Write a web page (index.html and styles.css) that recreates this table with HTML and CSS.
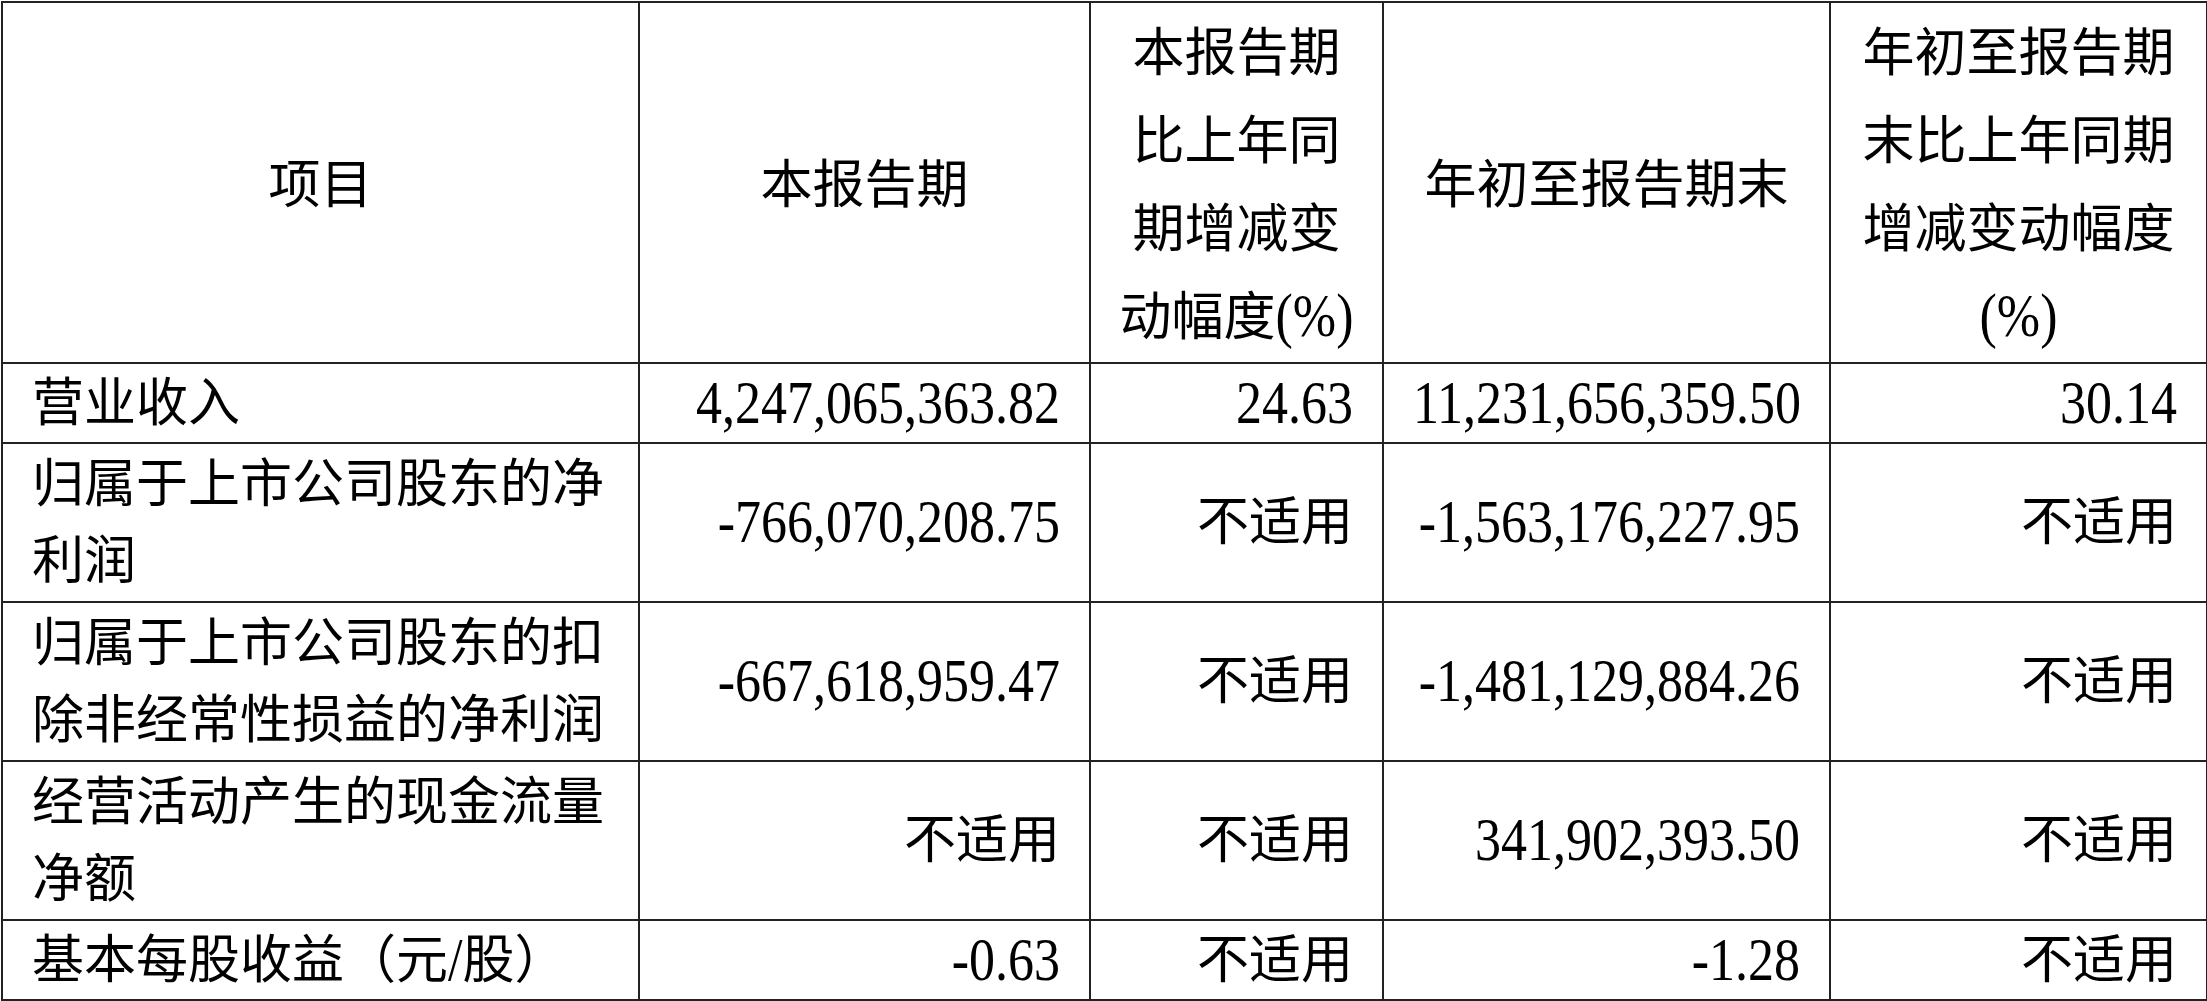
FILE: index.html
```html
<!DOCTYPE html>
<html lang="zh-CN">
<head>
<meta charset="utf-8">
<title>主要会计数据和财务指标</title>
<link rel="stylesheet" href="styles.css">
</head>
<body>
<div class="page">
<table class="report">
  <colgroup>
    <col class="c-item">
    <col class="c-cur">
    <col class="c-cur-pct">
    <col class="c-ytd">
    <col class="c-ytd-pct">
  </colgroup>
  <thead>
    <tr class="head">
      <th>项目</th>
      <th>本报告期</th>
      <th>本报告期<br>比上年同<br>期增减变<br>动幅度<span class="lat">(%)</span></th>
      <th>年初至报告期末</th>
      <th>年初至报告期<br>末比上年同期<br>增减变动幅度<br><span class="lat">(%)</span></th>
    </tr>
  </thead>
  <tbody>
    <tr class="row-single">
      <td class="item">营业收入</td>
      <td class="val"><span class="lat">4,247,065,363.82</span></td>
      <td class="val"><span class="lat">24.63</span></td>
      <td class="val"><span class="lat">11,231,656,359.50</span></td>
      <td class="val"><span class="lat">30.14</span></td>
    </tr>
    <tr class="row-double">
      <td class="item">归属于上市公司股东的净利润</td>
      <td class="val"><span class="lat">-766,070,208.75</span></td>
      <td class="val">不适用</td>
      <td class="val"><span class="lat">-1,563,176,227.95</span></td>
      <td class="val">不适用</td>
    </tr>
    <tr class="row-double">
      <td class="item">归属于上市公司股东的扣除非经常性损益的净利润</td>
      <td class="val"><span class="lat">-667,618,959.47</span></td>
      <td class="val">不适用</td>
      <td class="val"><span class="lat">-1,481,129,884.26</span></td>
      <td class="val">不适用</td>
    </tr>
    <tr class="row-double">
      <td class="item">经营活动产生的现金流量净额</td>
      <td class="val">不适用</td>
      <td class="val">不适用</td>
      <td class="val"><span class="lat">341,902,393.50</span></td>
      <td class="val">不适用</td>
    </tr>
    <tr class="row-single">
      <td class="item">基本每股收益（元<span class="lat">/</span>股）</td>
      <td class="val"><span class="lat">-0.63</span></td>
      <td class="val">不适用</td>
      <td class="val"><span class="lat">-1.28</span></td>
      <td class="val">不适用</td>
    </tr>
  </tbody>
</table>
</div>
</body>
</html>
```

FILE: styles.css
```css
html, body {
  margin: 0;
  padding: 0;
  background: #ffffff;
}

.page {
  padding: 1px 0 0 1px;
}

.report {
  border-collapse: collapse;
  table-layout: fixed;
  width: 2205px;
  font-family: "Liberation Serif", "Noto Sans CJK SC", serif;
  font-size: 52px;
  color: #000000;
}

.c-item { width: 637px; }
.c-cur { width: 451px; }
.c-cur-pct { width: 293px; }
.c-ytd { width: 447px; }
.c-ytd-pct { width: 377px; }

.report th,
.report td {
  border: 2px solid #222222;
  padding: 0 29px 0 29px;
  vertical-align: middle;
  overflow: hidden;
}

.report th {
  font-weight: normal;
  text-align: center;
  line-height: 88px;
  padding-top: 6px;
  padding-bottom: 0;
  padding-left: 20px;
  padding-right: 20px;
}

.head { height: 361px; }
.row-single { height: 80px; }
.row-double { height: 159px; }

.report td {
  line-height: 77px;
}

.report td.item {
  text-align: left;
  padding-left: 29px;
  padding-right: 20px;
}

.report td.val {
  text-align: right;
  padding-right: 29px;
}

.lat {
  display: inline-block;
  transform: scaleY(1.16);
  transform-origin: 50% 60%;
}
```
